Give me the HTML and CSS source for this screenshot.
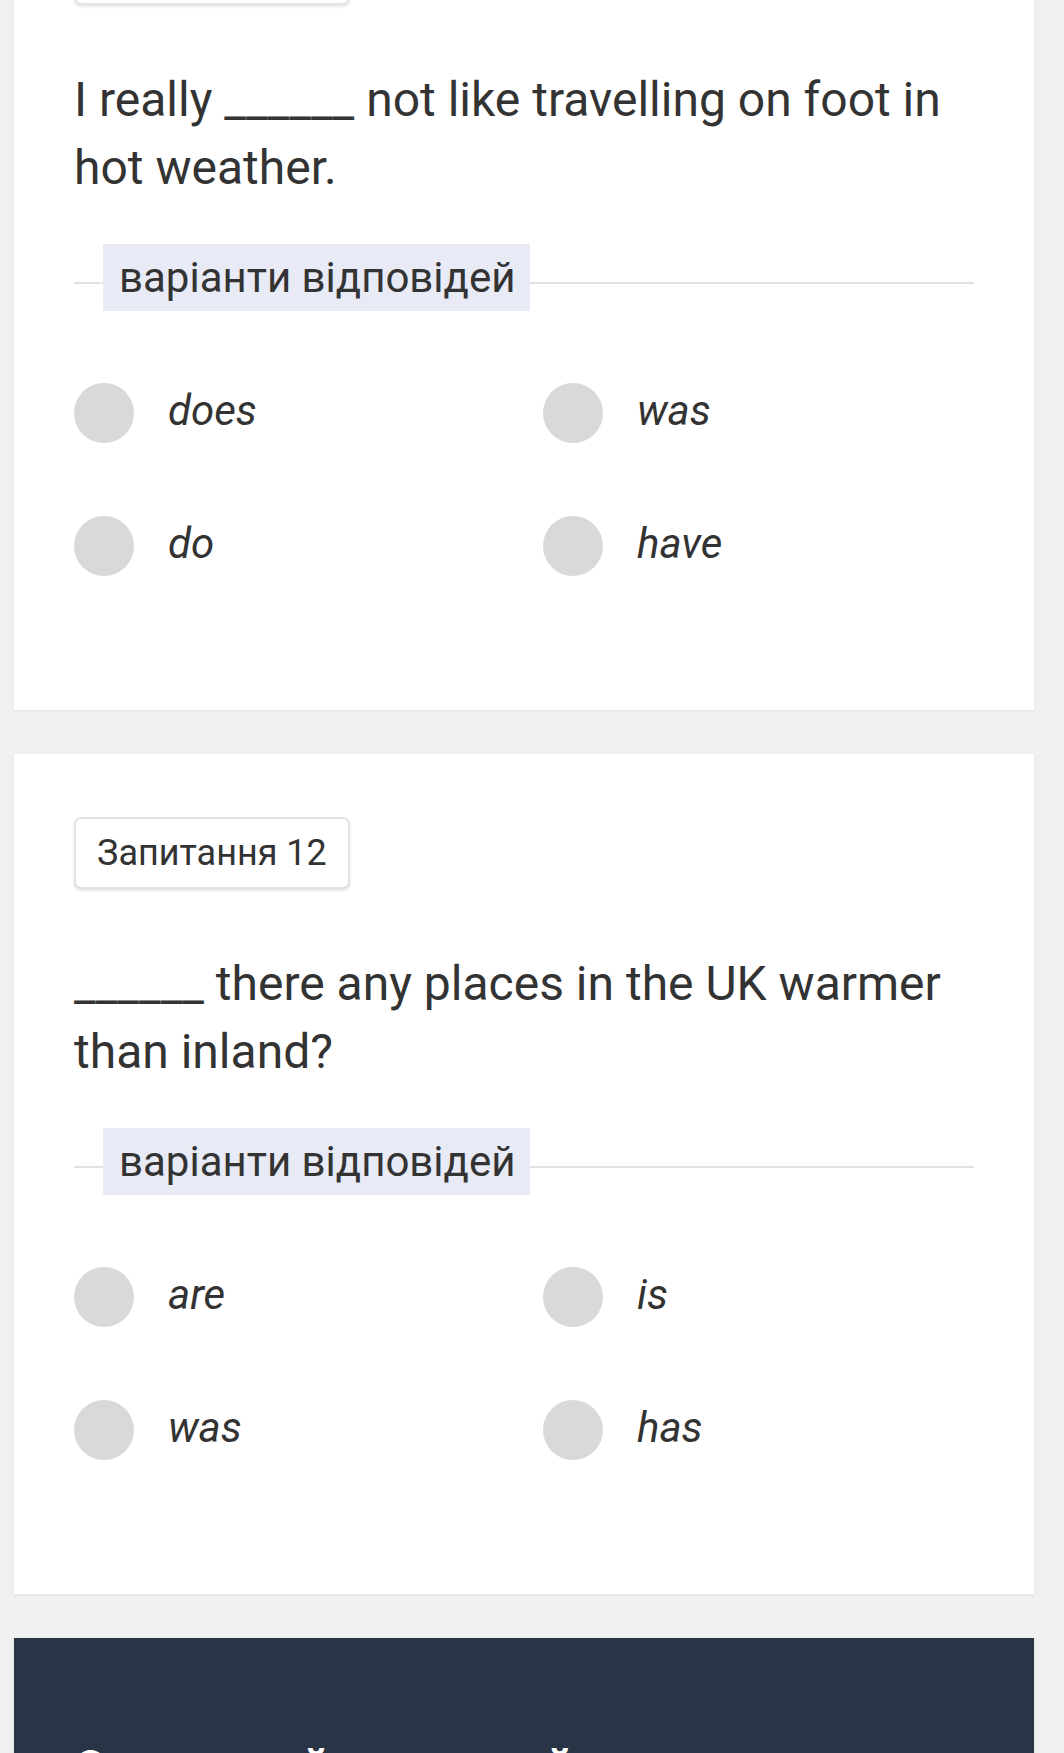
FILE: index.html
```html
<!DOCTYPE html>
<html lang="uk">
<head>
<meta charset="utf-8">
<title>Тест</title>
<link rel="stylesheet" href="styles.css">
</head>
<body>
<main class="page">
  <section class="card card-first">
    <div class="badge">Запитання 11</div>
    <p class="question">I really ______ not like travelling on foot in hot weather.</p>
    <div class="divider"><span class="divider-label">варіанти відповідей</span></div>
    <ul class="options">
      <li class="option"><span class="radio"></span><span class="option-text">does</span></li>
      <li class="option"><span class="radio"></span><span class="option-text">was</span></li>
      <li class="option"><span class="radio"></span><span class="option-text">do</span></li>
      <li class="option"><span class="radio"></span><span class="option-text">have</span></li>
    </ul>
  </section>

  <section class="card">
    <div class="badge">Запитання 12</div>
    <p class="question">______ there any places in the UK warmer than inland?</p>
    <div class="divider"><span class="divider-label">варіанти відповідей</span></div>
    <ul class="options">
      <li class="option"><span class="radio"></span><span class="option-text">are</span></li>
      <li class="option"><span class="radio"></span><span class="option-text">is</span></li>
      <li class="option"><span class="radio"></span><span class="option-text">was</span></li>
      <li class="option"><span class="radio"></span><span class="option-text">has</span></li>
    </ul>
  </section>

  <section class="promo">
    <h2 class="promo-title">Отриманий загальний курс</h2>
  </section>
</main>
</body>
</html>
```

FILE: styles.css
```css
* {
  box-sizing: border-box;
}

html, body {
  margin: 0;
  padding: 0;
}

body {
  background: #f1f1f1;
  font-family: Roboto, "Noto Sans", "Liberation Sans", sans-serif;
  color: #333333;
  overflow: hidden;
}

.page {
  display: flex;
  flex-direction: column;
  gap: 44px;
  margin: -130px 30px 0 14px;
}

.card {
  background: #ffffff;
  box-shadow: 0 1px 3px rgba(0, 0, 0, 0.07);
  padding: 63px 60px 134px 60px;
}

.badge {
  display: inline-block;
  font-size: 36px;
  line-height: 44px;
  padding: 12px 21px;
  border: 2px solid #e2e2e2;
  border-radius: 7px;
  box-shadow: 0 2px 3px rgba(0, 0, 0, 0.1);
  color: #333333;
  background: #ffffff;
}

.question {
  margin: 61px 0 0;
  font-size: 48px;
  line-height: 68px;
  color: #333333;
}

.divider {
  display: flex;
  align-items: center;
  margin-top: 42px;
}

.divider::before,
.divider::after {
  content: "";
  height: 2px;
  margin-top: 10px;
  background: #e2e2e2;
}

.divider::before {
  width: 29px;
}

.divider::after {
  flex: 1;
}

.divider-label {
  background: #e8eaf5;
  padding: 0 15px 0 16px;
  font-size: 42px;
  line-height: 67px;
  color: #333333;
}

.options {
  list-style: none;
  margin: 72px 0 0;
  padding: 0;
  display: grid;
  grid-template-columns: 469px 1fr;
  row-gap: 73px;
}

.option {
  display: flex;
  align-items: center;
  gap: 34px;
  height: 60px;
}

.radio {
  width: 60px;
  height: 60px;
  border-radius: 50%;
  background: #d9d9d9;
  flex: none;
}

.option-text {
  font-size: 42px;
  font-style: italic;
  line-height: 50px;
  color: #333333;
  margin-top: -5px;
}

.promo {
  background: #2a3447;
  box-shadow: 0 1px 3px rgba(0, 0, 0, 0.1);
  padding: 99px 60px 200px 60px;
}

.promo-title {
  margin: 0;
  font-size: 48px;
  line-height: 62px;
  font-weight: 700;
  color: #ffffff;
}
```
